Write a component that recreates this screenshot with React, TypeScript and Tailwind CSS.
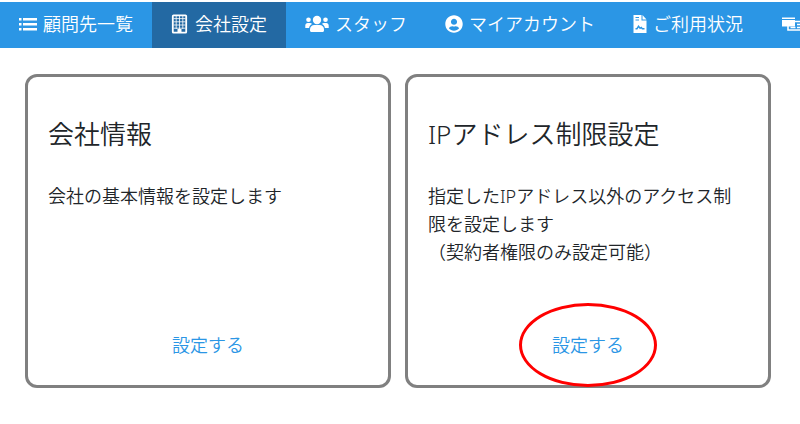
import { FaUserCircle } from 'react-icons/fa'
import type { ReactNode } from 'react'

interface NavItem {
  label: string
  icon: ReactNode
  active?: boolean
  iconOnly?: boolean
}

interface SettingCard {
  title: string
  lines: string[]
  marked?: boolean
}

function ListIcon() {
  return (
    <svg viewBox="0 0 18 18" className="size-[18px]" fill="currentColor" aria-hidden="true">
      <path d="M0 3h2.5v2.5H0zM0 8h2.5v2.5H0zM0 13h2.5v2.5H0zM4 3h14v2.5H4zM4 8h14v2.5H4zM4 13h14v2.5H4z" />
    </svg>
  )
}

function BuildingIcon() {
  return (
    <svg viewBox="0 0 18 20" className="h-5 w-[18px]" fill="none" stroke="currentColor" aria-hidden="true">
      <rect x="1.8" y="1.3" width="13.4" height="17.4" rx="0.8" strokeWidth="1.8" />
      <path
        d="M5.2 2v13M8.5 2v13M11.8 2v13M2.5 4.6h12M2.5 7.8h12M2.5 11h12M2.5 14.2h12"
        strokeWidth="1"
        opacity="0.8"
      />
      <path d="M6.5 15h4v3.8h-4z" fill="currentColor" stroke="none" />
    </svg>
  )
}

function UsersIcon() {
  return (
    <svg viewBox="0 0 24 18" className="h-[18px] w-6" fill="currentColor" aria-hidden="true">
      <circle cx="12" cy="5" r="4.2" />
      <path d="M5 15.5v-1.2c0-2.5 2-4.3 4.4-4.3h5.2c2.4 0 4.4 1.8 4.4 4.3v1.2c0 .9-.6 1.5-1.5 1.5h-11c-.9 0-1.5-.6-1.5-1.5z" />
      <circle cx="3.5" cy="4.8" r="2.3" />
      <circle cx="20.5" cy="4.8" r="2.3" />
      <path d="M.3 13v-2.5c0-1.4 1-2.4 2.4-2.4h2.5c.8 0 1.4.3 1.8.8-1.700.8-2.7 2.2-2.9 4.100zM23.7 13v-2.5c0-1.4-1-2.4-2.4-2.4h-2.5c-.8 0-1.4.3-1.8.8 1.7.8 2.7 2.2 2.9 4.1z" />
    </svg>
  )
}

function DocumentIcon() {
  return (
    <svg viewBox="0 0 14 18" className="h-[18px] w-3.5" fill="currentColor" aria-hidden="true">
      <path d="M.5 0h8v5.5h5V18H.5z" />
      <path d="M9.5 0l4 4.5h-4z" />
      <path d="M2.5 2.5h3.5M2.5 5h3.5" fill="none" stroke="#2b96e5" strokeWidth="1" />
      <path
        d="M2.5 13.7h1.5l1.5-2.4 1.6 2 1.2-.8 1 1.2h2.2"
        fill="none"
        stroke="#2b96e5"
        strokeWidth="1.4"
      />
    </svg>
  )
}

function CardsIcon() {
  return (
    <svg viewBox="0 0 28 18" className="h-[18px] w-7" aria-hidden="true">
      <path d="M7 6.5h20v8.5H7z" fill="#2b96e5" stroke="currentColor" strokeWidth="1.6" />
      <path d="M9.5 12.5h5M16 9.5h8M16 12.5h8" stroke="currentColor" strokeWidth="1.4" />
      <path d="M1 2.5h13v9H1z" fill="currentColor" />
      <path d="M1 4.5h13" stroke="#2b96e5" strokeWidth="1" />
    </svg>
  )
}

const navItems: NavItem[] = [
  { label: '顧問先一覧', icon: <ListIcon /> },
  { label: '会社設定', icon: <BuildingIcon />, active: true },
  { label: 'スタッフ', icon: <UsersIcon /> },
  { label: 'マイアカウント', icon: <FaUserCircle className="size-[18px]" /> },
  { label: 'ご利用状況', icon: <DocumentIcon /> },
  { label: 'お支払い', icon: <CardsIcon />, iconOnly: true },
]

const cards: SettingCard[] = [
  { title: '会社情報', lines: ['会社の基本情報を設定します'] },
  {
    title: 'IPアドレス制限設定',
    lines: ['指定したIPアドレス以外のアクセス制限を設定します', '（契約者権限のみ設定可能）'],
    marked: true,
  },
]

function Card({ card }: { card: SettingCard }) {
  return (
    <section className="flex min-h-[314px] flex-1 flex-col rounded-xl border-3 border-[#808080] px-5 pt-[39px] pb-[26px]">
      <h2 className="text-[26px] leading-9 text-[#212529]">{card.title}</h2>
      <div className="mt-[30px] text-lg leading-7 text-[#212529]">
        {card.lines.map((line) => (
          <p key={line}>{line}</p>
        ))}
      </div>
      <div className="mt-auto text-center text-lg leading-7">
        <a href="#" className="relative inline-block text-[#2b96e5]">
          設定する
          {card.marked && (
            <span className="pointer-events-none absolute -inset-x-[33px] -inset-y-7 rounded-[50%] border-3 border-[#ff0000]" />
          )}
        </a>
      </div>
    </section>
  )
}

export default function App() {
  return (
    <div className="overflow-hidden bg-white pb-9 font-['Noto_Sans','Noto_Sans_CJK_JP',sans-serif] font-[350]">
      <nav className="mt-0.5 flex h-[46px] bg-[#2b96e5]">
        {navItems.map((item) => (
          <a
            key={item.label}
            href="#"
            aria-label={item.iconOnly ? item.label : undefined}
            className={`flex shrink-0 items-center gap-1.5 px-[19px] pb-0.5 text-lg whitespace-nowrap text-white ${
              item.active ? 'bg-[#2369a3]' : ''
            }`}
          >
            {item.icon}
            {!item.iconOnly && item.label}
          </a>
        ))}
      </nav>
      <main className="flex gap-3.5 pt-[26px] pr-[29px] pl-[25px]">
        {cards.map((card) => (
          <Card key={card.title} card={card} />
        ))}
      </main>
    </div>
  )
}
